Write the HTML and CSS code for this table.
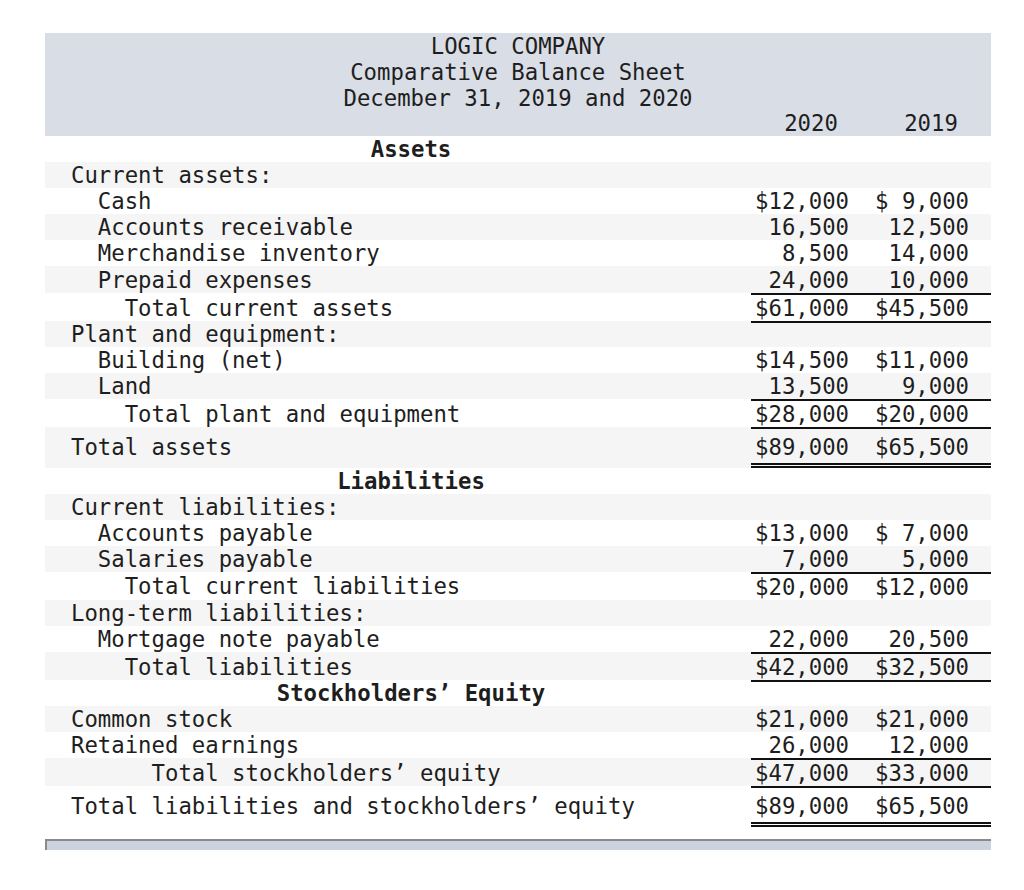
FILE: index.html
```html
<!DOCTYPE html>
<html lang="en">
<head>
<meta charset="utf-8">
<title>LOGIC COMPANY Comparative Balance Sheet</title>
<link rel="stylesheet" href="styles.css">
</head>
<body>
<div class="page">
  <div class="sheet">
    <div class="head">
      <div class="title">
        <div>LOGIC COMPANY</div>
        <div>Comparative Balance Sheet</div>
        <div>December 31, 2019 and 2020</div>
      </div>
      <div class="row years"><span class="lbl"></span><span class="yr">2020</span><span class="yr">2019</span></div>
    </div>
    <div class="body">
      <div class="row"><span class="lbl sec">Assets</span><span class="num"></span><span class="num"></span></div>
      <div class="row"><span class="lbl">Current assets:</span><span class="num"></span><span class="num"></span></div>
      <div class="row"><span class="lbl i2">Cash</span><span class="num">$12,000</span><span class="num">$ 9,000</span></div>
      <div class="row"><span class="lbl i2">Accounts receivable</span><span class="num">16,500</span><span class="num">12,500</span></div>
      <div class="row"><span class="lbl i2">Merchandise inventory</span><span class="num">8,500</span><span class="num">14,000</span></div>
      <div class="row"><span class="lbl i2">Prepaid expenses</span><span class="num">24,000</span><span class="num">10,000</span></div>
      <div class="row ruled2"><span class="lbl i4">Total current assets</span><span class="num top bot">$61,000</span><span class="num top bot">$45,500</span></div>
      <div class="row"><span class="lbl">Plant and equipment:</span><span class="num"></span><span class="num"></span></div>
      <div class="row"><span class="lbl i2">Building (net)</span><span class="num">$14,500</span><span class="num">$11,000</span></div>
      <div class="row"><span class="lbl i2">Land</span><span class="num">13,500</span><span class="num">9,000</span></div>
      <div class="row ruled2"><span class="lbl i4">Total plant and equipment</span><span class="num top bot">$28,000</span><span class="num top bot">$20,000</span></div>
      <div class="row grand"><span class="lbl">Total assets</span><span class="num dbl">$89,000</span><span class="num dbl">$65,500</span></div>
      <div class="row"><span class="lbl sec">Liabilities</span><span class="num"></span><span class="num"></span></div>
      <div class="row"><span class="lbl">Current liabilities:</span><span class="num"></span><span class="num"></span></div>
      <div class="row"><span class="lbl i2">Accounts payable</span><span class="num">$13,000</span><span class="num">$ 7,000</span></div>
      <div class="row"><span class="lbl i2">Salaries payable</span><span class="num">7,000</span><span class="num">5,000</span></div>
      <div class="row ruled1"><span class="lbl i4">Total current liabilities</span><span class="num top">$20,000</span><span class="num top">$12,000</span></div>
      <div class="row"><span class="lbl">Long-term liabilities:</span><span class="num"></span><span class="num"></span></div>
      <div class="row"><span class="lbl i2">Mortgage note payable</span><span class="num">22,000</span><span class="num">20,500</span></div>
      <div class="row ruled2"><span class="lbl i4">Total liabilities</span><span class="num top bot">$42,000</span><span class="num top bot">$32,500</span></div>
      <div class="row"><span class="lbl sec">Stockholders’ Equity</span><span class="num"></span><span class="num"></span></div>
      <div class="row"><span class="lbl">Common stock</span><span class="num">$21,000</span><span class="num">$21,000</span></div>
      <div class="row"><span class="lbl">Retained earnings</span><span class="num">26,000</span><span class="num">12,000</span></div>
      <div class="row ruled2"><span class="lbl i6">Total stockholders’ equity</span><span class="num top bot">$47,000</span><span class="num top bot">$33,000</span></div>
      <div class="row grand"><span class="lbl">Total liabilities and stockholders’ equity</span><span class="num dbl">$89,000</span><span class="num dbl">$65,500</span></div>
    </div>
  </div>
  <div class="bar"></div>
</div>
</body>
</html>
```
FILE: styles.css
```css
html, body {
  margin: 0;
  padding: 0;
  background: #ffffff;
}

.page {
  padding: 33px 0 0 45px;
  font-family: "DejaVu Sans Mono", "Liberation Mono", monospace;
  font-size: 22.3px;
  color: #1e1e1e;
}

.sheet {
  width: 946px;
}

.head {
  background: #d9dde5;
}

.title {
  text-align: center;
  line-height: 26px;
}

.row {
  display: grid;
  grid-template-columns: 706px 120px 120px;
  height: 26.1px;
  box-sizing: border-box;
}

.row.ruled1 {
  height: 27.1px;
}

.row.ruled2 {
  height: 28.1px;
}

.row > span {
  box-sizing: border-box;
  display: flex;
  align-items: center;
  white-space: pre;
  line-height: 26px;
}

.years {
  height: 25px;
}

.years > span {
  line-height: 25px;
}

.yr {
  justify-content: center;
}

.body .row:nth-child(even) {
  background: #f5f5f5;
}

.lbl {
  padding-left: 26px;
}

.i2 { padding-left: calc(26px + 2ch); }
.i4 { padding-left: calc(26px + 4ch); }
.i6 { padding-left: calc(26px + 6ch); }

.sec {
  font-weight: bold;
  justify-content: center;
}

.num {
  justify-content: flex-end;
  padding-right: 22px;
}

.top {
  border-top: 2px solid #111111;
}

.bot {
  border-bottom: 2px solid #111111;
}

.grand {
  height: 41px;
}

.grand > span {
  align-items: flex-start;
  padding-top: 7px;
}

.dbl {
  border-bottom: 5px double #111111;
}

.bar {
  width: 944px;
  height: 9px;
  margin-top: 12px;
  border-top: 2px solid #8a8a8a;
  border-left: 2px solid #8a8a8a;
  background: #ccd3df;
}
```
